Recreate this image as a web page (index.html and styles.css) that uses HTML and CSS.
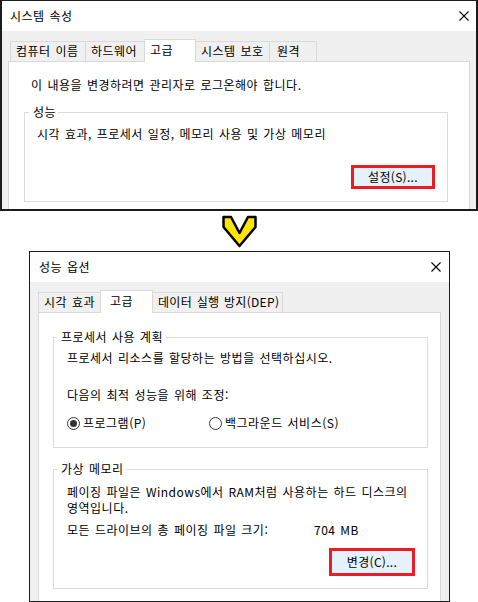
FILE: index.html
```html
<!DOCTYPE html>
<html lang="ko">
<head>
<meta charset="utf-8">
<title>시스템 속성 - 성능 옵션</title>
<link rel="stylesheet" href="styles.css">
</head>
<body>
<div class="dlg dlg-sys">
  <div class="titlebar">
    <span class="title">시스템 속성</span>
    <svg class="close" width="10" height="10" viewBox="0 0 10 10"><path d="M0.5 0.5L9.5 9.5M9.5 0.5L0.5 9.5" stroke="#000" stroke-width="1.1" fill="none"/></svg>
  </div>
  <div class="client">
    <div class="tabs">
      <div class="tab">컴퓨터 이름</div>
      <div class="tab">하드웨어</div>
      <div class="tab active">고급</div>
      <div class="tab">시스템 보호</div>
      <div class="tab">원격</div>
    </div>
    <div class="panel">
      <p class="note">이 내용을 변경하려면 관리자로 로그온해야 합니다.</p>
      <fieldset class="group group-perf">
        <legend>성능</legend>
        <p>시각 효과, 프로세서 일정, 메모리 사용 및 가상 메모리</p>
        <div class="btnrow"><span class="hl"><span class="btn">설정(S)...</span></span></div>
      </fieldset>
    </div>
  </div>
</div>

<div class="arrow">
  <svg width="40" height="40" viewBox="0 0 40 40"><polygon points="3.5,6 11,6 19.5,22 28,6 35.5,6 35.5,16 19.5,35 3.5,16" fill="#ffe600" stroke="#000" stroke-width="2.5" stroke-linejoin="round"/></svg>
</div>

<div class="dlg dlg-perf">
  <div class="titlebar">
    <span class="title">성능 옵션</span>
    <svg class="close" width="10" height="10" viewBox="0 0 10 10"><path d="M0.5 0.5L9.5 9.5M9.5 0.5L0.5 9.5" stroke="#000" stroke-width="1.1" fill="none"/></svg>
  </div>
  <div class="client">
    <div class="tabs">
      <div class="tab">시각 효과</div>
      <div class="tab active">고급</div>
      <div class="tab">데이터 실행 방지(DEP)</div>
    </div>
    <div class="panel">
      <fieldset class="group group-cpu">
        <legend>프로세서 사용 계획</legend>
        <p>프로세서 리소스를 할당하는 방법을 선택하십시오.</p>
        <p class="adjust">다음의 최적 성능을 위해 조정:</p>
        <div class="radios">
          <label class="radio"><span class="dot checked"></span>프로그램(P)</label>
          <label class="radio"><span class="dot"></span>백그라운드 서비스(S)</label>
        </div>
      </fieldset>
      <fieldset class="group group-vm">
        <legend>가상 메모리</legend>
        <p>페이징 파일은 Windows에서 RAM처럼 사용하는 하드 디스크의<br>영역입니다.</p>
        <div class="size-row"><span class="size-label">모든 드라이브의 총 페이징 파일 크기:</span><span>704 MB</span></div>
        <div class="btnrow"><span class="hl"><span class="btn">변경(C)...</span></span></div>
      </fieldset>
    </div>
  </div>
</div>
</body>
</html>
```
FILE: styles.css
```css
* { box-sizing: border-box; }
html, body { margin: 0; padding: 0; }
body {
  width: 478px;
  height: 602px;
  overflow: hidden;
  background: #fff;
  font-family: "Noto Sans CJK KR", "Noto Sans", sans-serif;
  font-size: 12px;
  line-height: 16px;
  letter-spacing: 0.5px;
  word-spacing: 1px;
  color: #000;
}
p { margin: 0; }

.dlg {
  border: 1px solid #1c1c1c;
  background: #f0f0f0;
  display: flex;
  flex-direction: column;
  overflow: hidden;
}
.dlg-sys { width: 478px; height: 211px; border-width: 1px 2px 2px 2px; }
.dlg-perf { width: 421px; height: 351px; margin-left: 29px; }

.titlebar {
  flex: none;
  height: 30px;
  background: #fff;
  display: flex;
  align-items: center;
  justify-content: space-between;
  padding: 0 8px 0 9px;
}
.dlg-sys .titlebar { padding: 0 7px 0 8px; }
.close { display: block; }

.client {
  flex: 1;
  min-height: 0;
  display: flex;
  flex-direction: column;
  padding-top: 8px;
}
.dlg-sys .client { padding-left: 6px; padding-right: 6px; }
.dlg-perf .client { padding-left: 8px; padding-right: 8px; }

.tabs {
  flex: none;
  display: flex;
  align-items: flex-start;
  height: 23px;
  margin-bottom: -1px;
  position: relative;
  z-index: 1;
}
.dlg-sys .tabs { margin-left: 2px; }
.tab {
  height: 20px;
  margin-top: 2px;
  border: 1px solid #d9d9d9;
  border-bottom: 0;
  padding-left: 5px;
  line-height: 18px;
  white-space: nowrap;
  background: #f0f0f0;
}
.tab + .tab { margin-left: -1px; }
.tab.active {
  height: 23px;
  margin-top: 0;
  background: #fff;
  line-height: 20px;
  position: relative;
  z-index: 1;
}
.dlg-sys .tab:nth-child(1) { width: 76px; }
.dlg-sys .tab:nth-child(2) { width: 60px; }
.dlg-sys .tab:nth-child(3) { width: 52px; }
.dlg-sys .tab:nth-child(4) { width: 75px; }
.dlg-sys .tab:nth-child(5) { width: 48px; padding-left: 7px; }
.dlg-perf .tab:nth-child(1) { width: 63px; }
.dlg-perf .tab:nth-child(2) { width: 53px; padding-left: 9px; }
.dlg-perf .tab:nth-child(3) { width: 131px; letter-spacing: 0.3px; }

.panel {
  flex: 1;
  min-height: 0;
  background: #fff;
  border: 1px solid #d9d9d9;
  border-bottom: 0;
}
.dlg-sys .panel { padding: 15px 21px 0 15px; }
.dlg-perf .panel { padding: 16px 12px 0 14px; }

.note { margin-left: 7px; }

.group {
  margin: 0;
  min-width: 0;
  border: 1px solid #dcdcdc;
}
.group legend {
  padding: 0 2px 0 4px;
  line-height: 16px;
}
.group-perf { margin-top: 11px; padding: 6px 12px 12px 12px; }
.group-perf legend { margin-left: -8px; }
.group-cpu { padding: 5px 12px 16px 13px; }
.group-cpu legend { margin-left: -10px; padding-right: 3px; }
.group-vm { margin-top: 13px; padding: 7px 12px 12px 13px; }
.group-vm legend { margin-left: -10px; padding-right: 3px; }

.adjust { margin-top: 21px; }

.radios {
  margin-top: 12px;
  display: grid;
  grid-template-columns: 142px auto;
}
.radio { display: flex; align-items: center; gap: 3px; }
.dot {
  width: 13px;
  height: 13px;
  border: 1px solid #333;
  border-radius: 50%;
  display: flex;
  align-items: center;
  justify-content: center;
}
.dot.checked::after {
  content: "";
  width: 7px;
  height: 7px;
  border-radius: 50%;
  background: #333;
}

.size-row { display: flex; margin-top: 6px; }
.size-label { width: 247px; }

.btnrow { display: flex; justify-content: flex-end; }
.group-perf .btnrow { margin-top: 23px; }
.group-vm .btnrow { margin-top: 10px; }
.hl { display: block; border: 3px solid #ed1c24; }
.btn { display: block; background: #e5f1fb; text-align: center; letter-spacing: 0.3px; }
.group-perf .btn { width: 78px; height: 18px; line-height: 18px; }
.group-vm .btn { width: 80px; height: 22px; line-height: 22px; }

.arrow {
  height: 40px;
  display: flex;
  justify-content: center;
  padding-left: 2px;
}
.arrow svg { display: block; }
```
